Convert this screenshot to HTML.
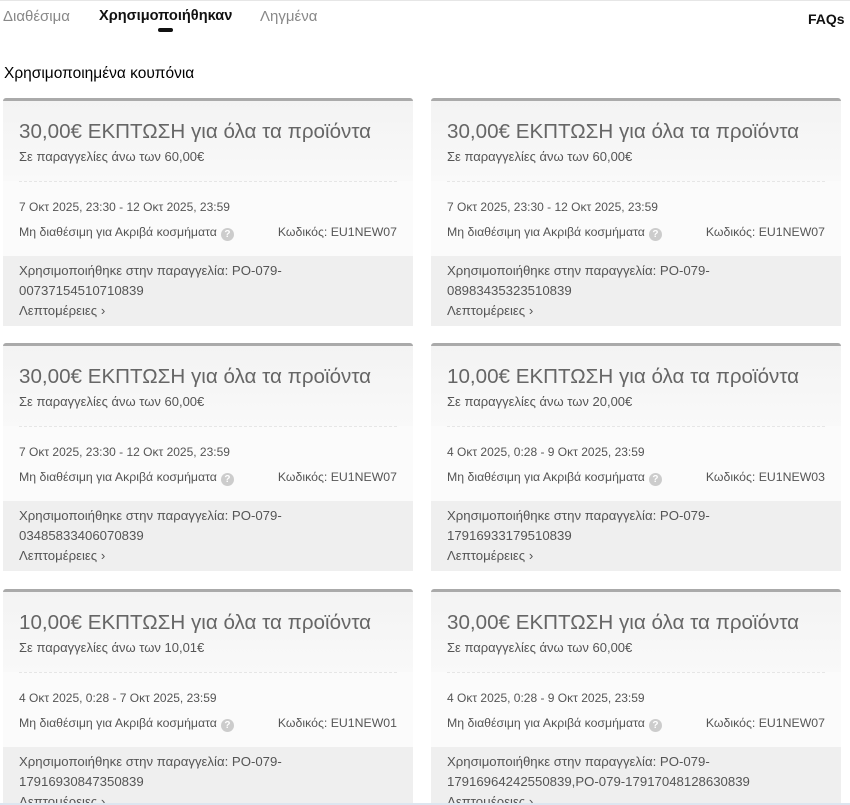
<!DOCTYPE html>
<html><head><meta charset="utf-8"><style>
*{margin:0;padding:0;box-sizing:border-box}
html{width:850px;height:805px;overflow:hidden}
body{width:850px;height:805px;overflow:hidden;background:#fff;font-family:"Liberation Sans","DejaVu Sans",sans-serif;position:relative;color:#333}
.topline{position:absolute;left:0;top:0;width:850px;height:1px;background:#e6e6e6}
.tab{position:absolute;top:8px;font-size:15px;color:#888;white-space:nowrap}
.tab.act{color:#111;font-weight:bold;font-size:14.6px}
.ul{position:absolute;left:158px;top:28px;width:15px;height:4px;border-radius:2px;background:#111}
.faq{position:absolute;left:808px;top:11px;font-size:14px;font-weight:bold;color:#111}
h2{position:absolute;left:4px;top:65px;font-size:15.5px;font-weight:normal;color:#000}
.card{position:absolute;width:410px;height:228px;border-top:3px solid #aaa;border-radius:3px 3px 0 0;background:#fbfbfb;overflow:hidden}
.top{position:absolute;left:0;top:0;width:410px;height:80px;background:linear-gradient(#f3f3f3,#f9f9f9)}
.t{position:absolute;left:16px;top:19px;font-size:20.6px;color:#666;white-space:nowrap}
.s{position:absolute;left:16px;top:48px;font-size:13px;color:#555;white-space:nowrap}
.dash{position:absolute;left:16px;right:16px;top:80px;border-top:1px dashed #e6e6e6}
.d{position:absolute;left:16px;top:99px;font-size:12px;color:#555;white-space:nowrap}
.n{position:absolute;left:16px;top:124px;font-size:12.3px;color:#555;white-space:nowrap}
.q{display:inline-block;width:13px;height:13px;border-radius:50%;background:#ccc;color:#fff;font-size:10px;text-align:center;line-height:13px;vertical-align:-1px;margin-left:4px;font-weight:bold}
.c{position:absolute;right:16px;top:124px;font-size:12.3px;color:#555;white-space:nowrap}
.bot{position:absolute;left:0;top:155px;width:410px;height:73px;background:#efefef;padding:5px 16px;font-size:13.2px;color:#555;line-height:20px}
</style></head><body>
<div class="topline"></div>
<div class="tab" style="left:3px">Διαθέσιμα</div>
<div class="tab act" style="left:99px">Χρησιμοποιήθηκαν</div>
<div class="ul"></div>
<div class="tab" style="left:260px">Ληγμένα</div>
<div class="faq">FAQs</div>
<h2>Χρησιμοποιημένα κουπόνια</h2>

<div class="card" style="left:3px;top:98px"><div class="top"></div><div class="t">30,00€ ΕΚΠΤΩΣΗ για όλα τα προϊόντα</div><div class="s">Σε παραγγελίες άνω των 60,00€</div><div class="dash"></div><div class="d">7 Οκτ 2025, 23:30 - 12 Οκτ 2025, 23:59</div><div class="n">Μη διαθέσιμη για Ακριβά κοσμήματα<span class="q">?</span></div><div class="c">Κωδικός: EU1NEW07</div><div class="bot">Χρησιμοποιήθηκε στην παραγγελία: PO-079-<br>00737154510710839<br>Λεπτομέρειες ›</div></div>

<div class="card" style="left:431px;top:98px"><div class="top"></div><div class="t">30,00€ ΕΚΠΤΩΣΗ για όλα τα προϊόντα</div><div class="s">Σε παραγγελίες άνω των 60,00€</div><div class="dash"></div><div class="d">7 Οκτ 2025, 23:30 - 12 Οκτ 2025, 23:59</div><div class="n">Μη διαθέσιμη για Ακριβά κοσμήματα<span class="q">?</span></div><div class="c">Κωδικός: EU1NEW07</div><div class="bot">Χρησιμοποιήθηκε στην παραγγελία: PO-079-<br>08983435323510839<br>Λεπτομέρειες ›</div></div>

<div class="card" style="left:3px;top:343px"><div class="top"></div><div class="t">30,00€ ΕΚΠΤΩΣΗ για όλα τα προϊόντα</div><div class="s">Σε παραγγελίες άνω των 60,00€</div><div class="dash"></div><div class="d">7 Οκτ 2025, 23:30 - 12 Οκτ 2025, 23:59</div><div class="n">Μη διαθέσιμη για Ακριβά κοσμήματα<span class="q">?</span></div><div class="c">Κωδικός: EU1NEW07</div><div class="bot">Χρησιμοποιήθηκε στην παραγγελία: PO-079-<br>03485833406070839<br>Λεπτομέρειες ›</div></div>

<div class="card" style="left:431px;top:343px"><div class="top"></div><div class="t">10,00€ ΕΚΠΤΩΣΗ για όλα τα προϊόντα</div><div class="s">Σε παραγγελίες άνω των 20,00€</div><div class="dash"></div><div class="d">4 Οκτ 2025, 0:28 - 9 Οκτ 2025, 23:59</div><div class="n">Μη διαθέσιμη για Ακριβά κοσμήματα<span class="q">?</span></div><div class="c">Κωδικός: EU1NEW03</div><div class="bot">Χρησιμοποιήθηκε στην παραγγελία: PO-079-<br>17916933179510839<br>Λεπτομέρειες ›</div></div>

<div class="card" style="left:3px;top:589px"><div class="top"></div><div class="t">10,00€ ΕΚΠΤΩΣΗ για όλα τα προϊόντα</div><div class="s">Σε παραγγελίες άνω των 10,01€</div><div class="dash"></div><div class="d">4 Οκτ 2025, 0:28 - 7 Οκτ 2025, 23:59</div><div class="n">Μη διαθέσιμη για Ακριβά κοσμήματα<span class="q">?</span></div><div class="c">Κωδικός: EU1NEW01</div><div class="bot">Χρησιμοποιήθηκε στην παραγγελία: PO-079-<br>17916930847350839<br>Λεπτομέρειες ›</div></div>

<div class="card" style="left:431px;top:589px"><div class="top"></div><div class="t">30,00€ ΕΚΠΤΩΣΗ για όλα τα προϊόντα</div><div class="s">Σε παραγγελίες άνω των 60,00€</div><div class="dash"></div><div class="d">4 Οκτ 2025, 0:28 - 9 Οκτ 2025, 23:59</div><div class="n">Μη διαθέσιμη για Ακριβά κοσμήματα<span class="q">?</span></div><div class="c">Κωδικός: EU1NEW07</div><div class="bot">Χρησιμοποιήθηκε στην παραγγελία: PO-079-<br>17916964242550839,PO-079-17917048128630839<br>Λεπτομέρειες ›</div></div>

<div style="position:absolute;left:0;top:803px;width:850px;height:2px;background:#dde6f0"></div>
</body></html>
